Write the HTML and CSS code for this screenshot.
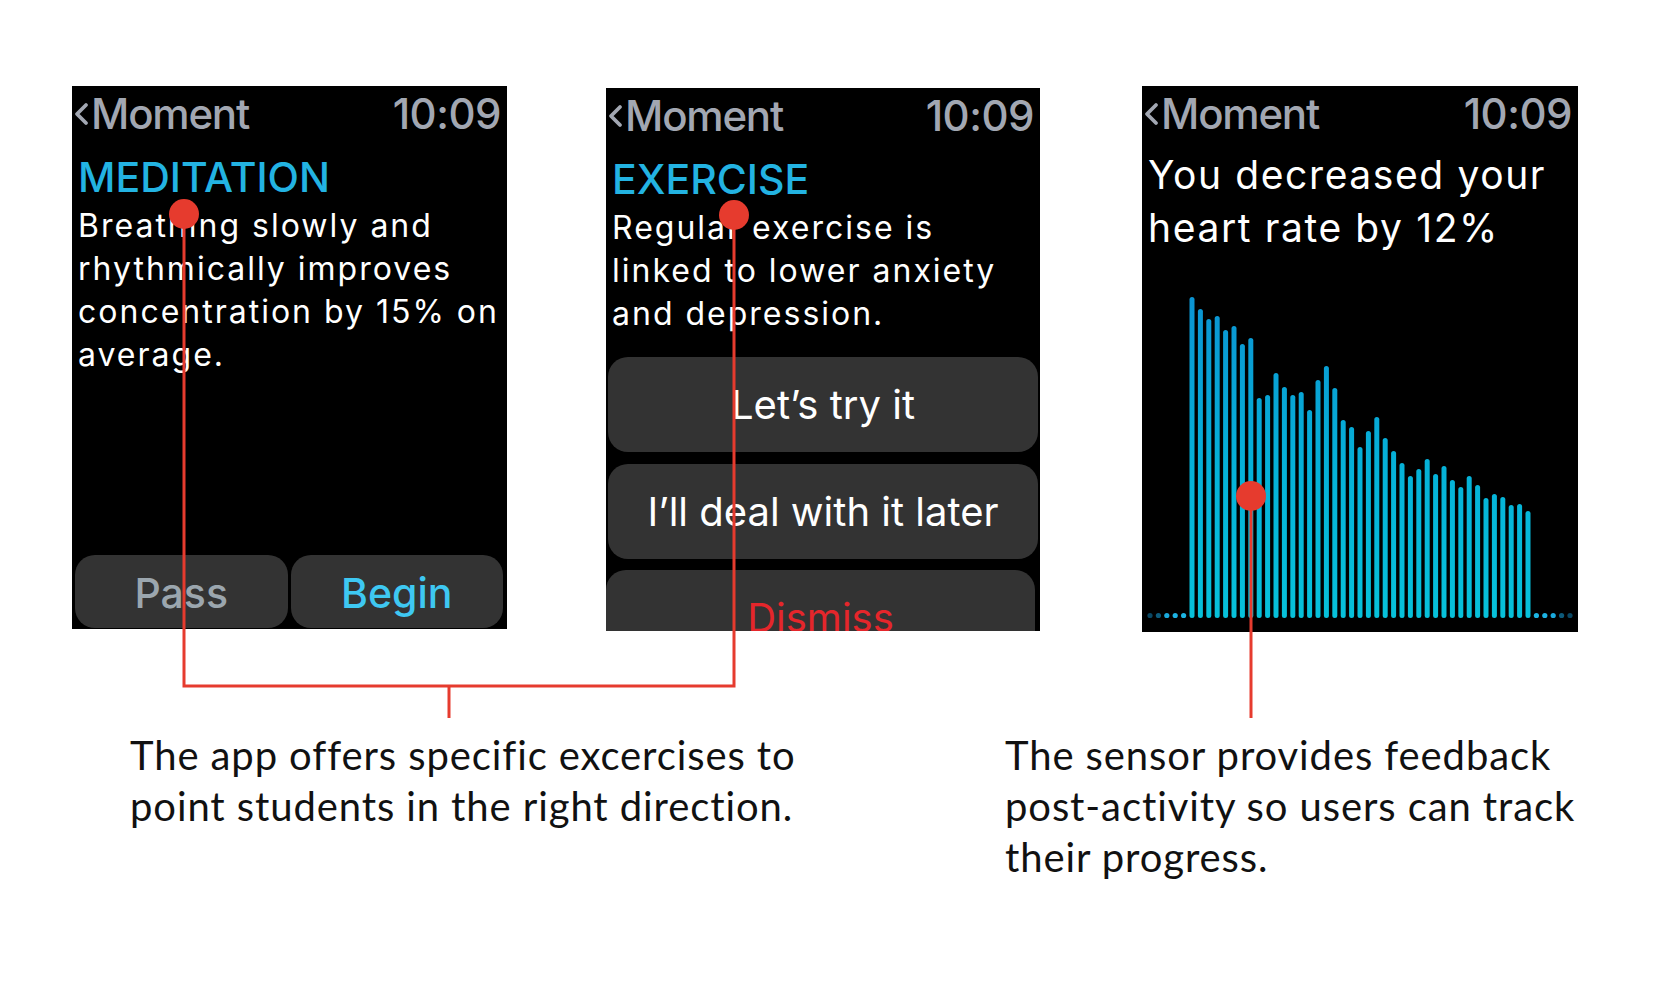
FILE: index.html
```html
<!DOCTYPE html>
<html lang="en">
<head>
<meta charset="utf-8">
<title>Moment watch screens</title>
<link rel="stylesheet" href="styles.css">
</head>
<body>
<div class="page">
  <div class="screens">
    <section class="watch w1">
      <div class="hdr">
        <span class="back"><svg class="chev" viewBox="0 0 16 24"><path d="M13 3 L4 12 L13 21"/></svg>Moment</span>
        <span class="time">10:09</span>
      </div>
      <div class="title">MEDITATION</div>
      <p class="body">Breathing slowly and<br>rhythmically improves<br>concentration by 15% on<br>average.</p>
      <div class="pair">
        <div class="btn pass">Pass</div>
        <div class="btn begin">Begin</div>
      </div>
    </section>

    <section class="watch w2">
      <div class="hdr">
        <span class="back"><svg class="chev" viewBox="0 0 16 24"><path d="M13 3 L4 12 L13 21"/></svg>Moment</span>
        <span class="time">10:09</span>
      </div>
      <div class="title">EXERCISE</div>
      <p class="body">Regular exercise is<br>linked to lower anxiety<br>and depression.</p>
      <div class="stack">
        <div class="btn">Let’s try it</div>
        <div class="btn">I’ll deal with it later</div>
        <div class="btn dismiss">Dismiss</div>
      </div>
    </section>

    <section class="watch w3">
      <div class="hdr">
        <span class="back"><svg class="chev" viewBox="0 0 16 24"><path d="M13 3 L4 12 L13 21"/></svg>Moment</span>
        <span class="time">10:09</span>
      </div>
      <p class="big">You decreased your<br>heart rate by 12%</p>
      <svg class="chart" viewBox="0 0 436 378">
        <defs>
          <linearGradient id="bar" gradientUnits="userSpaceOnUse" x1="0" y1="40" x2="0" y2="364">
            <stop offset="0" stop-color="#0b93d2"/>
            <stop offset="0.55" stop-color="#05b2d8"/>
            <stop offset="1" stop-color="#07c1da"/>
          </linearGradient>
        </defs>
        <g class="dots">
          <circle cx="8" cy="361.5" r="2.6" fill="#0a4763"/>
          <circle cx="16.4" cy="361.5" r="2.6" fill="#0d5a7a"/>
          <circle cx="24.8" cy="361.5" r="2.6" fill="#1aa9dc"/>
          <circle cx="33.2" cy="361.5" r="2.6" fill="#1cb2e2"/>
          <circle cx="41.6" cy="361.5" r="2.6" fill="#1cb4e2"/>
          <circle cx="394.4" cy="361.5" r="2.6" fill="#1cb4e2"/>
          <circle cx="402.8" cy="361.5" r="2.6" fill="#1cb2e2"/>
          <circle cx="411.2" cy="361.5" r="2.6" fill="#1aa9dc"/>
          <circle cx="419.6" cy="361.5" r="2.6" fill="#0d5a7a"/>
          <circle cx="428" cy="361.5" r="2.6" fill="#0a4763"/>
        </g>
        <g class="bars" stroke="url(#bar)" stroke-width="5" stroke-linecap="round">
          <line x1="50" x2="50" y1="45.5" y2="361.5"/>
          <line x1="58.4" x2="58.4" y1="57.5" y2="361.5"/>
          <line x1="66.8" x2="66.8" y1="67.5" y2="361.5"/>
          <line x1="75.2" x2="75.2" y1="64.5" y2="361.5"/>
          <line x1="83.6" x2="83.6" y1="78.5" y2="361.5"/>
          <line x1="92" x2="92" y1="74.5" y2="361.5"/>
          <line x1="100.4" x2="100.4" y1="92.5" y2="361.5"/>
          <line x1="108.8" x2="108.8" y1="86.5" y2="361.5"/>
          <line x1="117.2" x2="117.2" y1="146.5" y2="361.5"/>
          <line x1="125.6" x2="125.6" y1="143.5" y2="361.5"/>
          <line x1="134" x2="134" y1="121.5" y2="361.5"/>
          <line x1="142.4" x2="142.4" y1="135.5" y2="361.5"/>
          <line x1="150.8" x2="150.8" y1="143.5" y2="361.5"/>
          <line x1="159.2" x2="159.2" y1="140.5" y2="361.5"/>
          <line x1="167.6" x2="167.6" y1="158.5" y2="361.5"/>
          <line x1="176" x2="176" y1="128.5" y2="361.5"/>
          <line x1="184.4" x2="184.4" y1="114.5" y2="361.5"/>
          <line x1="192.8" x2="192.8" y1="136.5" y2="361.5"/>
          <line x1="201.2" x2="201.2" y1="168.5" y2="361.5"/>
          <line x1="209.6" x2="209.6" y1="175.5" y2="361.5"/>
          <line x1="218" x2="218" y1="195.5" y2="361.5"/>
          <line x1="226.4" x2="226.4" y1="179.5" y2="361.5"/>
          <line x1="234.8" x2="234.8" y1="165.5" y2="361.5"/>
          <line x1="243.2" x2="243.2" y1="186.5" y2="361.5"/>
          <line x1="251.6" x2="251.6" y1="199.5" y2="361.5"/>
          <line x1="260" x2="260" y1="211.5" y2="361.5"/>
          <line x1="268.4" x2="268.4" y1="224.5" y2="361.5"/>
          <line x1="276.8" x2="276.8" y1="217.5" y2="361.5"/>
          <line x1="285.2" x2="285.2" y1="207.5" y2="361.5"/>
          <line x1="293.6" x2="293.6" y1="222.5" y2="361.5"/>
          <line x1="302" x2="302" y1="214.5" y2="361.5"/>
          <line x1="310.4" x2="310.4" y1="228.5" y2="361.5"/>
          <line x1="318.8" x2="318.8" y1="235.5" y2="361.5"/>
          <line x1="327.2" x2="327.2" y1="224.5" y2="361.5"/>
          <line x1="335.6" x2="335.6" y1="233.5" y2="361.5"/>
          <line x1="344" x2="344" y1="246.5" y2="361.5"/>
          <line x1="352.4" x2="352.4" y1="242.5" y2="361.5"/>
          <line x1="360.8" x2="360.8" y1="245.5" y2="361.5"/>
          <line x1="369.2" x2="369.2" y1="253.5" y2="361.5"/>
          <line x1="377.6" x2="377.6" y1="252.5" y2="361.5"/>
          <line x1="386" x2="386" y1="259.5" y2="361.5"/>
        </g>
      </svg>
    </section>
  </div>

  <div class="captions">
    <p class="cap cap1">The app offers specific excercises to<br>point students in the right direction.</p>
    <p class="cap cap2">The sensor provides feedback<br>post-activity so users can track<br>their progress.</p>
  </div>

  <svg class="notes" viewBox="0 0 1656 998">
    <g fill="none" stroke="#e63b2e" stroke-width="3">
      <path d="M184 214 V686 H734 V215"/>
      <path d="M449 686 V718"/>
      <path d="M1251 496 V718"/>
    </g>
    <g fill="#e63b2e">
      <circle cx="184" cy="214" r="15"/>
      <circle cx="734" cy="215" r="15"/>
      <circle cx="1251" cy="496" r="15"/>
    </g>
  </svg>
</div>
</body>
</html>
```

FILE: styles.css
```css
html, body {
  margin: 0;
  padding: 0;
  background: #ffffff;
}

.page {
  position: relative;
  width: 1656px;
  height: 998px;
  overflow: hidden;
  background: #ffffff;
}

.screens {
  display: flex;
  align-items: flex-start;
  padding: 86px 0 0 72px;
}

.watch {
  background: #000000;
  overflow: hidden;
  display: flex;
  flex-direction: column;
  font-family: Inter, "Open Sans", sans-serif;
  color: #ffffff;
  box-sizing: border-box;
}

.w1 {
  width: 435px;
  height: 543px;
}

.w2 {
  width: 434px;
  height: 543px;
  margin: 2px 0 0 99px;
}

.w3 {
  width: 436px;
  height: 546px;
  margin-left: 102px;
}

.hdr {
  display: flex;
  justify-content: space-between;
  align-items: center;
  height: 48px;
  padding: 4px 6px 0 1px;
  flex: none;
  font-size: 42px;
  line-height: 48px;
  font-weight: 500;
  color: #a2a7b2;
  letter-spacing: -1.2px;
}

.back {
  display: flex;
  align-items: center;
}

.chev {
  width: 16px;
  height: 24px;
  margin-right: 2px;
}

.chev path {
  fill: none;
  stroke: #a2a7b2;
  stroke-width: 3.8;
  stroke-linecap: round;
  stroke-linejoin: round;
}

.time {
  letter-spacing: -0.5px;
}

.title {
  margin-top: 15px;
  padding-left: 6px;
  font-size: 41px;
  line-height: 48px;
  font-weight: 500;
  color: #23b3e2;
  flex: none;
}

.body {
  margin: 3px 0 0;
  padding-left: 6px;
  font-size: 32px;
  line-height: 43px;
  letter-spacing: 2px;
  white-space: nowrap;
  flex: none;
}

.pair {
  margin-top: auto;
  display: flex;
  gap: 3px;
  padding: 0 4px 1px 3px;
}

.btn {
  background: #333333;
  border-radius: 20px;
  display: flex;
  align-items: center;
  justify-content: center;
  box-sizing: border-box;
  white-space: nowrap;
}

.pair .btn {
  flex: 1;
  height: 73px;
  padding-top: 3px;
  font-size: 41px;
  font-weight: 500;
}

.pass {
  color: #9ba6ae;
}

.begin {
  color: #3ec8f2;
}

.stack {
  margin-top: 22px;
  display: flex;
  flex-direction: column;
  gap: 12px;
  padding: 0 2px;
}

.stack .btn {
  flex: none;
  height: 95px;
  font-size: 40px;
  font-weight: 400;
  color: #ffffff;
}

.stack .dismiss {
  margin: -1px 3px 0 -2px;
  color: #e5262b;
}

.big {
  margin: 10px 0 0;
  padding-left: 6px;
  font-size: 39px;
  line-height: 53px;
  letter-spacing: 1.6px;
  white-space: nowrap;
  flex: none;
}

.chart {
  display: block;
  margin-top: auto;
  width: 436px;
  height: 378px;
  flex: none;
}

.captions {
  display: flex;
  margin-top: 98px;
  padding-left: 130px;
  font-family: Lato, "Open Sans", sans-serif;
  font-size: 40px;
  line-height: 51px;
  color: #111111;
}

.cap {
  margin: 0;
  white-space: nowrap;
  letter-spacing: 0.9px;
}

.cap1 {
  width: 875px;
  flex: none;
}

.notes {
  position: absolute;
  left: 0;
  top: 0;
  width: 1656px;
  height: 998px;
  pointer-events: none;
}
```
